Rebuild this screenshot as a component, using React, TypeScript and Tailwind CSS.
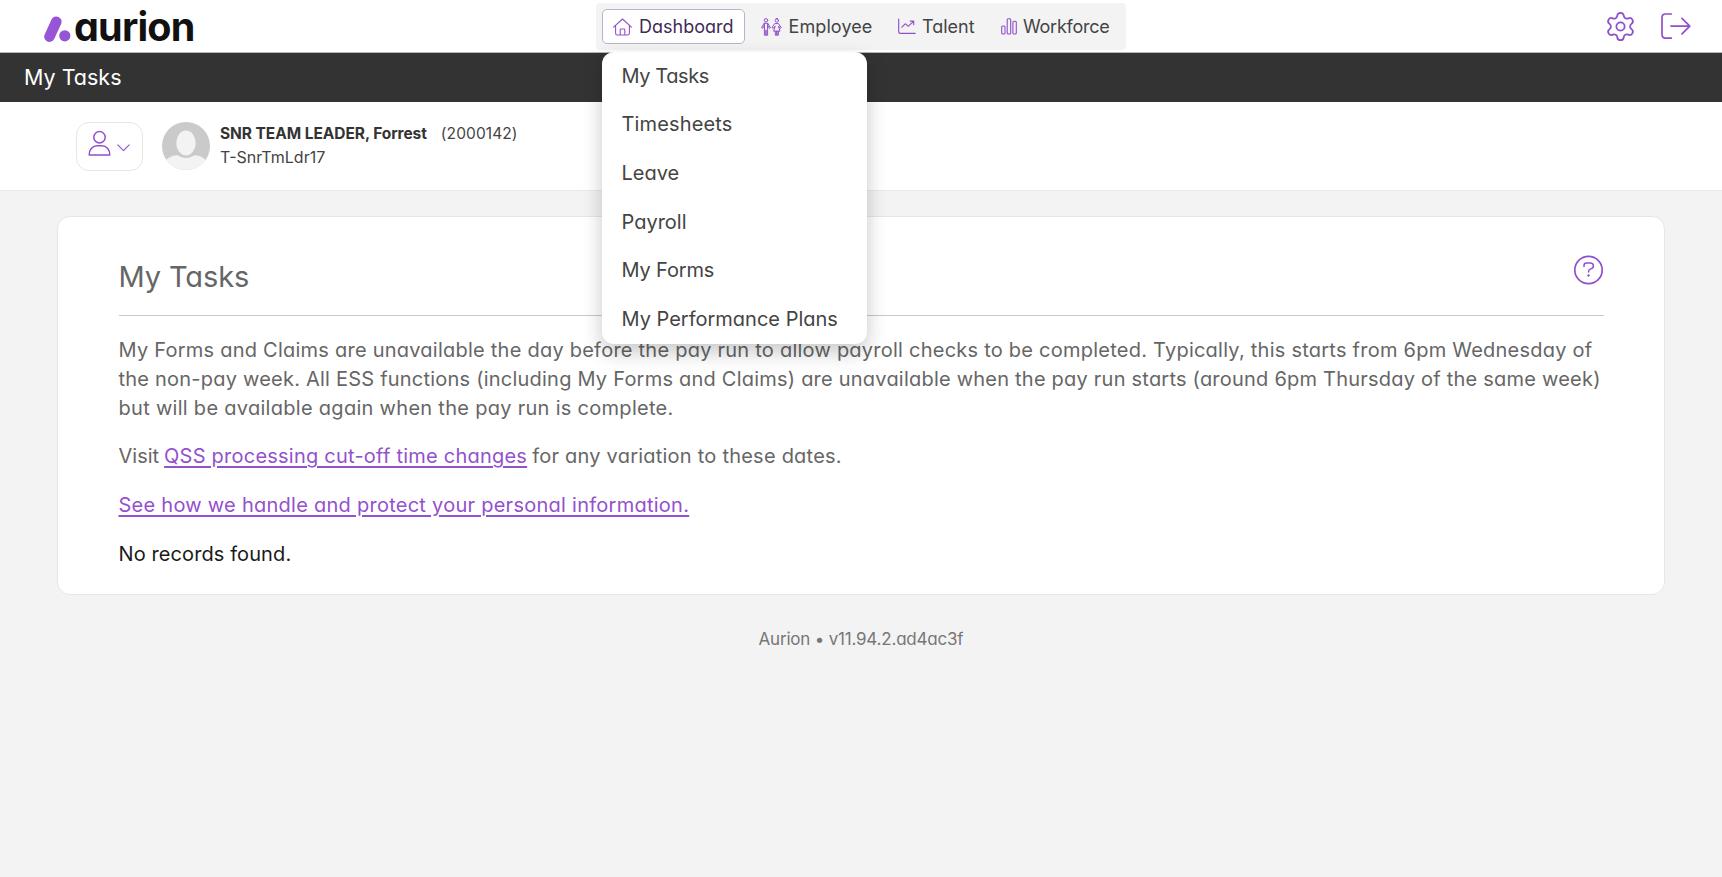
import type { ReactNode } from "react";
import { Settings } from "lucide-react";

const line = { fill: "none", stroke: "#9050cb", strokeLinecap: "round", strokeLinejoin: "round" } as const;

function HomeIcon() {
  return (
    <svg width="19" height="18" viewBox="0 0 19 18" {...line} strokeWidth="1.1" className="shrink-0">
      <path d="M0.6 9.2 9.5 1l8.9 8.2M2.6 7.6v7.6c0 1.1.7 1.8 1.8 1.8h10.2c1.1 0 1.8-.7 1.8-1.8V7.6M7.2 17v-5.2c0-.5.3-.8.8-.8h3c.5 0 .8.3.8.8V17" />
    </svg>
  );
}

function PeopleIcon() {
  return (
    <svg width="21" height="18" viewBox="0 0 21 18" {...line} strokeWidth="1" className="shrink-0">
      <circle cx="5" cy="2.3" r="1.7" />
      <path d="M3.4 9.5v7.7h1.5v-5M5 12.2v5h1.6V9.5M3.4 5.6v4.6M6.6 5.6v4.6M3.2 5.3h3.6l2.6 4.4-.9.6-1.9-2.8M3.2 5.3.6 9.7l.9.6 1.9-2.8" />
      <circle cx="15.8" cy="2.5" r="1.7" />
      <circle cx="15.8" cy=".7" r=".4" />
      <path d="M14.1 5.6h3.4l2.8 4.1-.9.7-2-2.4 1.6 5.2h-6.4l1.6-5.2-2 2.4-.9-.7zM14.3 13.2v4h1.4v-4M16 13.2v4h1.4v-4" />
    </svg>
  );
}

function TrendIcon() {
  return (
    <svg width="18" height="17" viewBox="0 0 18 17" {...line} strokeWidth="1.15" className="shrink-0">
      <path d="M.7 1v12.9c0 .9.5 1.4 1.4 1.4h15.2M3.8 9.2l3.1-3.1c.3-.3.7-.3 1 0l1.7 1.8c.3.3.7.3 1 0l5-4.6M12.2 3.1h3.5v3.6" />
    </svg>
  );
}

function BarsIcon() {
  return (
    <svg width="16" height="17" viewBox="0 0 16 17" {...line} strokeWidth="1.1" className="shrink-0">
      <rect x=".7" y="8" width="3.3" height="8" rx="1" />
      <rect x="6.2" y=".8" width="3.5" height="15.2" rx="1" />
      <rect x="11.9" y="3.2" width="3.4" height="12.8" rx="1" />
    </svg>
  );
}

function LogoutIcon() {
  return (
    <svg width="30" height="27" viewBox="0 0 30 27" {...line} strokeWidth="1.7">
      <path d="M10.3 1H4.6C2.4 1 1 2.4 1 4.6v17c0 2.2 1.4 3.6 3.6 3.6h5.7M10 13.1h18.6M21 5.4l7.8 7.7-7.8 7.7" />
    </svg>
  );
}

function HelpIcon() {
  return (
    <svg width="30" height="30" viewBox="0 0 30 30" {...line} strokeWidth="1.7">
      <circle cx="14.5" cy="15" r="13.7" />
      <path d="M10 11.4v-.9c0-1.6.9-2.5 2.5-2.5h3.8c1.9 0 3.1 1.2 3.1 2.9 0 1.6-.9 2.4-2.6 3-1.5.5-2.2 1.1-2.2 2.7v.4" strokeWidth="1.5" />
      <circle cx="14.5" cy="20.5" r=".9" fill="#9050cb" strokeWidth=".6" />
    </svg>
  );
}

function UserIcon() {
  return (
    <svg width="23" height="27" viewBox="0 0 23 27" {...line} strokeWidth="1.5">
      <circle cx="11.5" cy="7.3" r="5.7" />
      <path d="M1.200 25c-.3-5.3 3.3-9.2 8-9.2h4.6c4.7 0 8.3 3.9 8 9.2z" />
    </svg>
  );
}

function Avatar() {
  return (
    <svg width="48" height="48" viewBox="0 0 48 48" className="shrink-0">
      <defs>
        <clipPath id="face">
          <circle cx="24" cy="24" r="24" />
        </clipPath>
      </defs>
      <g clipPath="url(#face)">
        <rect width="48" height="48" fill="#cacaca" />
        <path d="M3 40c2-4 7-7 12.5-6.8C18 34.8 21 36 24 36s6-1.2 8.5-2.8C38 33 43 36 45 40v8H3z" fill="#f3f3f3" />
        <ellipse cx="24" cy="21" rx="9.7" ry="12.4" fill="#f3f3f3" />
      </g>
    </svg>
  );
}

function NavItem({ icon, label, className }: { icon: ReactNode; label: string; className: string }) {
  return (
    <a className={`flex h-[35px] items-center ${className}`}>
      {icon}
      <span className="leading-6">{label}</span>
    </a>
  );
}

const menu = [
  { label: "My Tasks", track: "tracking-[-0.4px]" },
  { label: "Timesheets", track: "tracking-[0.15px]" },
  { label: "Leave", track: "" },
  { label: "Payroll", track: "" },
  { label: "My Forms", track: "tracking-[-0.15px]" },
  { label: "My Performance Plans", track: "" },
];

export default function App() {
  return (
    <div className="flex h-[877px] w-full flex-col overflow-hidden bg-[#f3f3f3] font-['Inter',sans-serif] whitespace-nowrap text-[#444] [font-feature-settings:'cv11']">
      <header className="grid h-[53px] shrink-0 grid-cols-[1fr_auto_1fr] items-center border-b border-[#b4b8b8] bg-white">
        <div className="flex h-[52px] items-start pl-11">
          <svg width="27" height="27" viewBox="0 0 27 27" className="mt-4 shrink-0">
            <path d="M5.5 20.6 12.3 5.7" stroke="#9854d6" strokeWidth="10.6" strokeLinecap="round" />
            <circle cx="20.8" cy="19.8" r="5.6" fill="#9854d6" />
          </svg>
          <span className="ml-[3px] text-[39.5px] leading-[55px] font-bold tracking-[-0.8px] text-[#111]">aurion</span>
        </div>

        <nav className="mt-px flex h-[47px] w-[530px] rounded bg-[#f3f3f3] p-1.5 text-[18px]">
          <div className="relative mr-1 w-[143px]">
            <NavItem
              icon={<HomeIcon />}
              label="Dashboard"
              className="gap-[7px] rounded-[5px] border border-[#bdb0cb] bg-white pl-2.5 text-[#3f2b56]"
            />
            <ul className="absolute top-[43px] left-0 z-10 w-[265px] rounded-xl bg-white text-[20px] shadow-[0_8px_20px_rgba(0,0,0,0.22)]">
              {menu.map((m) => (
                <li key={m.label} className={`flex h-[48.7px] items-center pb-[1.5px] pl-[19.5px] ${m.track}`}>
                  {m.label}
                </li>
              ))}
            </ul>
          </div>
          <NavItem icon={<PeopleIcon />} label="Employee" className="w-[137px] gap-[6.5px] pl-3 tracking-[0.1px]" />
          <NavItem icon={<TrendIcon />} label="Talent" className="w-[102.5px] gap-1.5 pl-3" />
          <NavItem icon={<BarsIcon />} label="Workforce" className="w-[131.5px] gap-[6.5px] pl-3 tracking-[-0.25px]" />
        </nav>

        <div className="flex items-center justify-end gap-6 pr-[31px]">
          <Settings size={33} color="#9050cb" strokeWidth={1.3} />
          <LogoutIcon />
        </div>
      </header>

      <div className="flex h-[49px] shrink-0 items-center bg-[#333] pl-6 text-[21.5px] text-white">My Tasks</div>

      <section className="flex h-[89px] shrink-0 items-start border-b border-[#e8e8e8] bg-white pt-5 pl-[76px]">
        <button className="flex h-[49px] w-[67px] items-start rounded-[13px] border border-[#e6e6e6] pt-[7px] pl-[11px]">
          <UserIcon />
          <svg width="13" height="8" viewBox="0 0 13 8" {...line} strokeWidth="1.1" className="mt-3.5 ml-1.5">
            <path d="m.8.9 5.7 5.7L12.2.9" />
          </svg>
        </button>
        <div className="ml-[19px]">
          <Avatar />
        </div>
        <div className="ml-2.5 text-[15.5px] leading-[23.5px]">
          <div className="flex gap-3.5">
            <span className="font-bold tracking-[-0.06px] text-[#333]">SNR TEAM LEADER, Forrest</span>
            <span className="tracking-[0.1px]">(2000142)</span>
          </div>
          <div className="text-[16px]">T-SnrTmLdr17</div>
        </div>
      </section>

      <main className="mx-[57px] mt-[25px] h-[379px] shrink-0 rounded-[13px] border border-[#e6e6e6] bg-white px-[60.5px] text-[20px] leading-[29px] text-[#666]">
        <div className="flex h-[99px] items-start justify-between border-b border-[#c8c8c8] pt-[37.5px]">
          <h1 className="text-[29px] leading-[44px] tracking-[-0.1px]">My Tasks</h1>
          <HelpIcon />
        </div>
        <p className="mt-5">
          <span className="block tracking-[0.237px]">
            My Forms and Claims are unavailable the day before the pay run to allow payroll checks to be completed. Typically, this starts from 6pm Wednesday of
          </span>
          <span className="block tracking-[0.22px]">
            the non-pay week. All ESS functions (including My Forms and Claims) are unavailable when the pay run starts (around 6pm Thursday of the same week)
          </span>
          <span className="block tracking-[0.29px]">but will be available again when the pay run is complete.</span>
        </p>
        <p className="mt-[19px] flex gap-[5px] tracking-[0.23px]">
          <span className="tracking-normal">Visit</span>
          <a className="text-[#9351cd] underline decoration-[1.5px] underline-offset-[3px]">QSS processing cut-off time changes</a>
          <span>for any variation to these dates.</span>
        </p>
        <p className="mt-5 tracking-[0.26px]">
          <a className="text-[#9351cd] underline decoration-[1.5px] underline-offset-[3px]">
            See how we handle and protect your personal information.
          </a>
        </p>
        <p className="mt-[19.5px] tracking-[0.1px] text-[#1a1a1a]">No records found.</p>
      </main>

      <footer className="mt-[29px] text-center text-[17px] leading-[30px] tracking-[-0.2px] text-[#777]">Aurion • v11.94.2.ad4ac3f</footer>
    </div>
  );
}
